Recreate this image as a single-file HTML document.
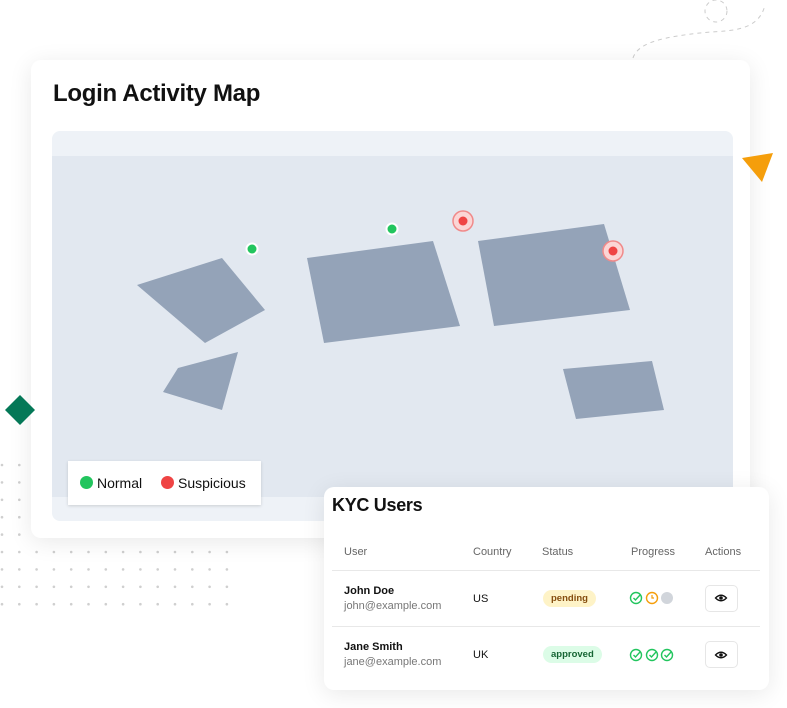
<!DOCTYPE html>
<html><head><meta charset="utf-8"><style>
*{margin:0;padding:0;box-sizing:border-box}
body{width:787px;height:708px;background:#fff;position:relative;overflow:hidden;font-family:"Liberation Sans",sans-serif;color:#111}
.abs{position:absolute}
.card{position:absolute;background:#fff;border-radius:10px;box-shadow:0 4px 24px rgba(0,0,0,.09)}
.th{position:absolute;top:546px;font-size:11px;color:#666}
.cell{position:absolute;font-size:11px}
.badge{position:absolute;font-size:9.5px;font-weight:bold;border-radius:9px;padding:3px 8px;line-height:11px}
.btn{position:absolute;width:33px;height:27px;border:1px solid #e6e6e6;border-radius:5px;background:#fff}
</style></head><body>
<svg class="abs" style="left:0;top:0" width="787" height="708" id="dots"></svg>
<svg class="abs" style="left:0;top:0" width="787" height="708">
<path d="M633 58 C638 42 665 37 700 33 C725 30 758 34 765 5" fill="none" stroke="#ccc" stroke-width="1" stroke-dasharray="4 4"/>
<circle cx="716" cy="11" r="11" fill="none" stroke="#ccc" stroke-dasharray="4 4"/>
</svg>
<div class="card" style="left:31px;top:60px;width:719px;height:478px"></div>
<div class="abs" style="left:53px;top:80px;font-size:24px;font-weight:bold;letter-spacing:-0.3px">Login Activity Map</div>
<div class="abs" style="left:52px;top:131px;width:681px;height:390px;background:#eef2f7;border-radius:8px"></div>
<div class="abs" style="left:52px;top:156px;width:681px;height:341px;background:#e2e8f0"></div>
<svg class="abs" style="left:0;top:0" width="787" height="708">
<g fill="#94a3b8">
<polygon points="137,285 222,258 265,310 205,343"/>
<polygon points="163,392 178,368 238,352 222,410"/>
<polygon points="307,258 433,241 460,326 324,343"/>
<polygon points="478,241 604,224 630,310 494,326"/>
<polygon points="563,369 652,361 664,410 576,419"/>
</g>
<circle cx="252" cy="249" r="5.5" fill="#22c55e" stroke="#fff" stroke-width="2"/>
<circle cx="392" cy="229" r="5.5" fill="#22c55e" stroke="#fff" stroke-width="2"/>
<circle cx="463" cy="221" r="10" fill="#fbd5d5" stroke="#f08a8a" stroke-width="1.5"/>
<circle cx="463" cy="221" r="4.5" fill="#ef4444"/>
<circle cx="613" cy="251" r="10" fill="#fbd5d5" stroke="#f08a8a" stroke-width="1.5"/>
<circle cx="613" cy="251" r="4.5" fill="#ef4444"/>
<polygon points="742,158 773,153 762,182" fill="#f59e0b"/>
<polygon points="20,395 35,410 20,425 5,410" fill="#047857"/>
</svg>
<div class="abs" style="left:68px;top:461px;width:193px;height:44px;background:#fff;box-shadow:0 1px 3px rgba(0,0,0,.15)"></div>
<div class="abs" style="left:80px;top:476px;width:13px;height:13px;border-radius:50%;background:#22c55e"></div>
<div class="abs" style="left:97px;top:475px;font-size:14px">Normal</div>
<div class="abs" style="left:161px;top:476px;width:13px;height:13px;border-radius:50%;background:#ef4444"></div>
<div class="abs" style="left:178px;top:475px;font-size:14px">Suspicious</div>

<div class="card" style="left:324px;top:487px;width:445px;height:203px"></div>
<div class="abs" style="left:332px;top:495px;font-size:18px;font-weight:bold;letter-spacing:-0.3px">KYC Users</div>
<div class="th" style="left:344px">User</div>
<div class="th" style="left:473px">Country</div>
<div class="th" style="left:542px">Status</div>
<div class="th" style="left:631px">Progress</div>
<div class="th" style="left:705px">Actions</div>
<div class="abs" style="left:332px;top:570px;width:428px;height:1px;background:#e8e8e8"></div>
<div class="abs" style="left:332px;top:626px;width:428px;height:1px;background:#e8e8e8"></div>
<div class="cell" style="left:344px;top:585px;font-weight:bold">John Doe</div>
<div class="cell" style="left:344px;top:600px;color:#777">john@example.com</div>
<div class="cell" style="left:473px;top:593px">US</div>
<div class="badge" style="left:543px;top:590px;background:#fef3c7;color:#854d0e">pending</div>
<div class="cell" style="left:344px;top:641px;font-weight:bold">Jane Smith</div>
<div class="cell" style="left:344px;top:656px;color:#777">jane@example.com</div>
<div class="cell" style="left:473px;top:649px">UK</div>
<div class="badge" style="left:543px;top:646px;background:#dcfce7;color:#166534">approved</div>
<div class="btn" style="left:705px;top:585px"></div>
<div class="btn" style="left:705px;top:641px"></div>
<svg class="abs" style="left:0;top:0" width="787" height="708">
<defs>
<g id="chk"><circle cx="0" cy="0" r="5.5" fill="none" stroke="#22c55e" stroke-width="1.4"/><path d="M-2.5 0 L-0.5 2 L4 -3" fill="none" stroke="#22c55e" stroke-width="1.4"/></g>
<g id="eye"><path d="M-5.5 0 Q0 -5.5 5.5 0 Q0 5.5 -5.5 0Z" fill="none" stroke="#111" stroke-width="1.3"/><circle r="1.8" fill="#111"/></g>
</defs>
<use href="#chk" x="636" y="598"/>
<circle cx="652" cy="598" r="5.5" fill="none" stroke="#f59e0b" stroke-width="1.4"/><path d="M652 595 V598 H654" fill="none" stroke="#f59e0b" stroke-width="1.2"/>
<circle cx="667" cy="598" r="6" fill="#d1d5db"/>
<use href="#chk" x="636" y="655"/><use href="#chk" x="652" y="655"/><use href="#chk" x="667" y="655"/>
<use href="#eye" x="721" y="598"/><use href="#eye" x="721" y="655"/>
</svg>
<script>
var s='';for(var r=0;r<9;r++){for(var c=0;c<14;c++){var x=2+c*17.3,y=465+r*17.4;if(x<31||y>540)s+='<circle cx="'+x+'" cy="'+y+'" r="1.3" fill="#cfcfcf"/>';}}
document.getElementById('dots').innerHTML=s;
</script>
</body></html>
